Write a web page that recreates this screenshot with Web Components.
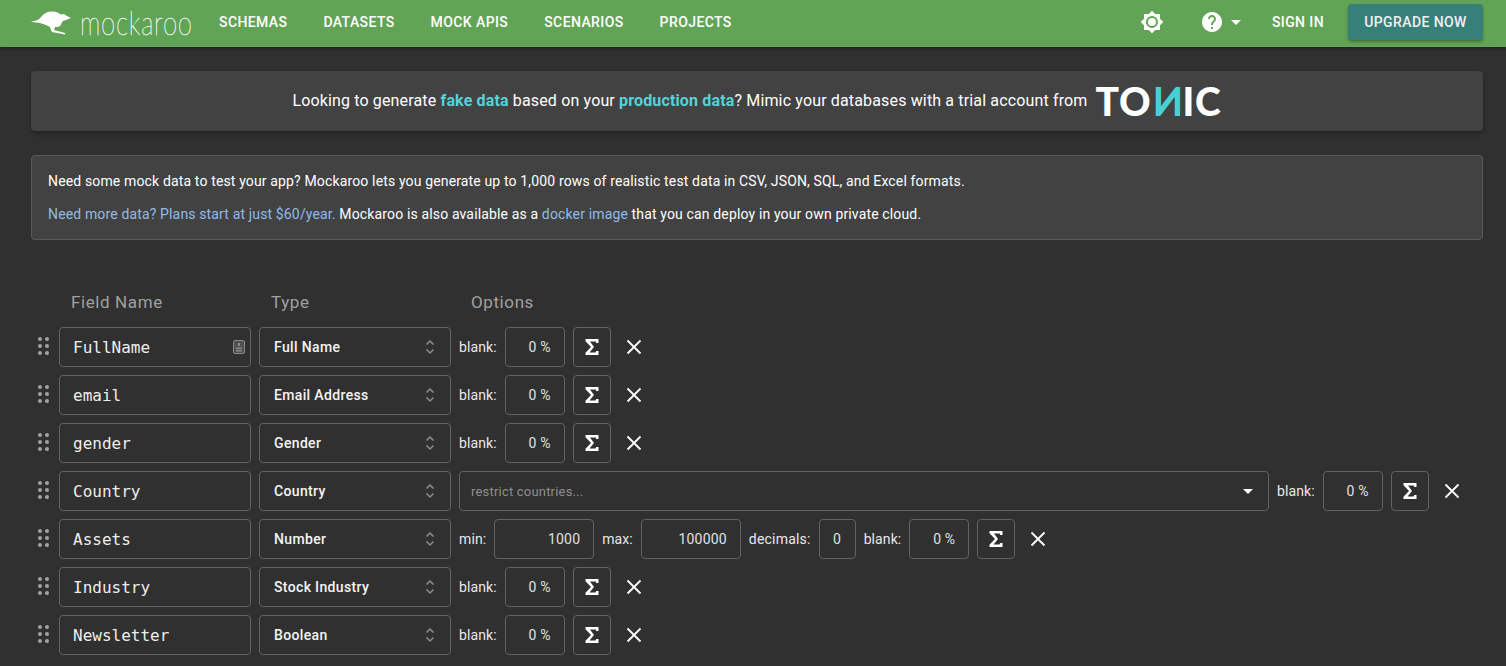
<!DOCTYPE html>
<html lang="en">
<head>
<meta charset="utf-8">
<title>Mockaroo</title>
<style>
  html, body { margin: 0; height: 100%; overflow: hidden; background: #303030; }
  body { font-family: Roboto, "Liberation Sans", sans-serif; color: #fff; }
  .fields { display: flex; flex-direction: column; gap: 8px; }
</style>
</head>
<body>
<mock-appbar></mock-appbar>
<mock-page>
  <tonic-banner></tonic-banner>
  <intro-notice></intro-notice>
  <field-head></field-head>
  <div class="fields">
    <field-row name="FullName" type="Full Name" pii></field-row>
    <field-row name="email" type="Email Address"></field-row>
    <field-row name="gender" type="Gender"></field-row>
    <field-row name="Country" type="Country">
      <text-select slot="options" placeholder="restrict countries..."></text-select>
    </field-row>
    <field-row name="Assets" type="Number">
      <span slot="options" class="opt">
        <opt-label>min:</opt-label><num-box width="100" value="1000"></num-box>
        <opt-label>max:</opt-label><num-box width="100" value="100000"></num-box>
        <opt-label style="letter-spacing:.2px">decimals:</opt-label><num-box width="37" value="0" center></num-box>
      </span>
    </field-row>
    <field-row name="Industry" type="Stock Industry"></field-row>
    <field-row name="Newsletter" type="Boolean"></field-row>
  </div>
</mock-page>

<script>
const define = (tag, css, html, setup) => {
  customElements.define(tag, class extends HTMLElement {
    connectedCallback() {
      if (this.shadowRoot) return
      this.attachShadow({ mode: 'open' })
      const body = typeof html === 'function' ? html(this) : html
      this.shadowRoot.innerHTML = `<style>${css}</style>${body}`
      if (setup) setup(this)
    }
  })
}

define('mock-appbar', `
  :host { display: flex; align-items: center; box-sizing: border-box; height: 47px; background: #62a456; padding: 0 23px 3px 31px;
    box-shadow: 0 2px 4px rgba(0,0,0,.3); position: relative; font: 500 14px Roboto, sans-serif; letter-spacing: .4px; }
  .logo { display: flex; align-items: center; width: 188px; height: 44px; }
  .logo svg { display: block; flex: none; }
  .word { font: 100 33px/44px Lato, Roboto, sans-serif; letter-spacing: 1px; margin-left: 8px; transform: scaleX(.78); transform-origin: left center; white-space: nowrap; -webkit-text-stroke: .35px #fff; }
  nav { display: flex; gap: 36px; }
  .spacer { flex: 1; }
  .right { display: flex; align-items: center; }
  .sun { display: block; margin-right: 36px; }
  .help { display: flex; align-items: center; gap: 7px; margin-right: 31px; }
  .caret { width: 0; height: 0; border: 5px solid transparent; border-top-color: #fff; border-bottom: 0; }
  .up { margin-left: 24px; width: 135px; height: 36px; display: flex; align-items: center; justify-content: center;
    background: #37807a; border-radius: 4px; box-shadow: 0 2px 3px rgba(0,0,0,.3); color: #f0f0f0; }
`, `
  <div class="logo">
    <svg width="41" height="27" viewBox="0 0 41 27"><path fill="#fff" d="M0 12C3 12.300 6 11.600 8 10 10 8.300 11 6.500 13 5 15 3.500 17.500 2.500 20 2.500 22 2.500 24 2.800 25 3 27 3.500 29 5 30 5.500L33 5 35 6.500 40 9 35 11C33 11.500 32 12 31 13 30.500 14.500 30 16 29 17 27.500 18 25.500 18 24 18L23 21 34 24 34 25.500 21 23C20 21.500 19.500 19.500 19 18 17.500 17.500 16.500 16.800 15 16 13 15.500 11 14.500 9 14 6 13.800 3 13.500 0 12Z"/></svg>
    <span class="word">mockaroo</span>
  </div>
  <nav><span>SCHEMAS</span><span>DATASETS</span><span>MOCK APIS</span><span>SCENARIOS</span><span>PROJECTS</span></nav>
  <span class="spacer"></span>
  <div class="right">
    <svg class="sun" width="24" height="24" viewBox="0 0 24 24"><path fill="#fff" d="M20 8.690V4h-4.690L12 .69 8.690 4H4v4.690L.69 12 4 15.310V20h4.690L12 23.310 15.310 20H20v-4.690L23.310 12 20 8.690zM12 18a6 6 0 1 1 0-12 6 6 0 0 1 0 12zm0-10a4 4 0 1 0 0 8 4 4 0 0 0 0-8z"/></svg>
    <div class="help">
      <svg width="24" height="24" viewBox="0 0 24 24" style="display:block"><path fill="#fff" d="M12 2C6.480 2 2 6.480 2 12s4.480 10 10 10 10-4.480 10-10S17.520 2 12 2zm1 17h-2v-2h2v2zm2.070-7.750-.9.920C13.450 12.900 13 13.500 13 15h-2v-.5c0-1.100.45-2.100 1.170-2.830l1.240-1.260c.37-.36.590-.86.590-1.410 0-1.100-.9-2-2-2s-2 .9-2 2H8c0-2.210 1.790-4 4-4s4 1.790 4 4c0 .88-.36 1.680-.93 2.250z"/></svg>
      <span class="caret"></span>
    </div>
    <span>SIGN IN</span>
    <span class="up">UPGRADE NOW</span>
  </div>
`)

define('mock-page', `
  :host { display: block; padding: 24px 23px 0 31px; }
`, `<slot></slot>`)

define('tonic-banner', `
  :host { display: flex; align-items: center; justify-content: center; box-sizing: border-box; height: 60px; padding-bottom: 2px; background: #424242; border-radius: 4px;
    box-shadow: 0 2px 5px rgba(0,0,0,.35); font-size: 16px; letter-spacing: .15px; color: #fff; margin-bottom: 24px; }
  b { color: #55d2d8; font-weight: 700; }
  .tonic { display: inline-flex; align-items: center; margin: 2px 0 0 8px; font: 900 39px/37px Lato, Inter, sans-serif; letter-spacing: .8px; color: #fff; }
  .n { color: #48d0d6; display: inline-block; transform: scaleX(-1); }
`, `
  <span>Looking to generate <b>fake data</b> based on your <b>production data</b>? Mimic your databases with a trial account from</span>
  <span class="tonic">TO<span class="n">N</span>IC</span>
`)

define('intro-notice', `
  :host { display: block; background: #424242; border: 1px solid #5a5a5a; border-radius: 4px; padding: 17px 16px 16px;
    font-size: 14px; line-height: 17px; letter-spacing: .145px; color: #fff; margin-bottom: 50px; }
  p { margin: 0; }
  p + p { margin-top: 16px; }
  a { color: #90bbe8; }
`, `
  <p>Need some mock data to test your app? Mockaroo lets you generate up to 1,000 rows of realistic test data in CSV, JSON, SQL, and Excel formats.</p>
  <p><a>Need more data? Plans start at just $60/year.</a> Mockaroo is also available as a <a>docker image</a> that you can deploy in your own private cloud.</p>
`)

define('field-head', `
  :host { display: flex; padding-left: 40px; height: 24px; margin-bottom: 13px; font-size: 17px; line-height: 24px; letter-spacing: .6px; color: #a0a0a0; }
  span { width: 200px; }
`, `<span>Field Name</span><span>Type</span><span>Options</span>`)

define('opt-label', `
  :host { display: inline-flex; align-items: center; height: 40px; font-size: 14px; letter-spacing: .1px; color: #e8e8e8; white-space: nowrap; }
`, `<slot></slot>`)

define('num-box', `
  :host { display: inline-flex; align-items: center; justify-content: flex-end; box-sizing: border-box; height: 40px;
    border: 1px solid #626262; border-radius: 4px; padding: 0 13px; font-size: 14px; letter-spacing: .2px; color: #e0e0e0; }
  :host([center]) { justify-content: center; padding: 0; }
`, el => {
  el.style.width = el.getAttribute('width') + 'px'
  return el.getAttribute('value')
})

define('text-select', `
  :host { display: flex; align-items: center; box-sizing: border-box; width: 810px; height: 40px; border: 1px solid #626262; border-radius: 4px;
    padding: 0 15px 0 11px; font-size: 13px; letter-spacing: .2px; color: #8e8e8e; }
  span { flex: 1; }
  i { width: 0; height: 0; border: 5px solid transparent; border-top-color: #fff; border-bottom: 0; }
`, el => `<span>${el.getAttribute('placeholder')}</span><i></i>`)

define('field-row', `
  :host { display: flex; align-items: center; gap: 8px; height: 40px; }
  .grip { display: grid; grid-template-columns: 4px 4px; gap: 2.500px; width: 12px; margin: 0 2px 2px 6px; justify-content: center; column-gap: 3px; flex: none; }
  .grip i { width: 4.500px; height: 4.500px; border-radius: 50%; background: #a2a2a2; }
  .box { box-sizing: border-box; width: 192px; height: 40px; flex: none; border: 1px solid #626262; border-radius: 4px; display: flex; align-items: center; position: relative; }
  .name { font: 16px "DejaVu Sans Mono", "Liberation Mono", monospace; padding-left: 13px; color: #eee; }
  .pii { position: absolute; right: 4px; top: 11px; display: block; }
  .type { font-size: 14px; font-weight: 500; letter-spacing: .35px; padding-left: 14px; color: #f4f4f4; }
  .arrows { position: absolute; right: 14px; top: 10px; display: block; }
  .opts { display: flex; align-items: center; gap: 8px; }
  ::slotted(.opt) { display: inline-flex; align-items: center; gap: 8px; }
  .sigma { box-sizing: border-box; width: 38px; height: 40px; border: 1px solid #626262; border-radius: 4px; display: flex; align-items: center; justify-content: center; flex: none; }
  .x { display: block; margin-left: 7px; flex: none; }
  svg { display: block; }
`, el => `
  <div class="grip">${'<i></i>'.repeat(6)}</div>
  <div class="box name">${el.getAttribute('name')}${el.hasAttribute('pii') ? `<svg class="pii" width="14" height="16" viewBox="0 0 14 16"><rect x="1.500" y="1.500" width="11" height="13" rx="1.500" fill="#505050" stroke="#8a8a8a"/><path fill="#8a8a8a" d="M6 4h2v3H6zM4 8.500h6V10H4zM4 11h6v1.500H4z"/></svg>` : ''}</div>
  <div class="box type">${el.getAttribute('type')}
    <svg class="arrows" width="12" height="18" viewBox="0 0 12 18"><path fill="none" stroke="#8c8c8c" stroke-width="1.500" d="M2.500 6.500l3.500-3.500 3.500 3.500M2.500 11.500l3.500 3.500 3.500-3.500"/></svg>
  </div>
  <div class="opts"><slot name="options"></slot>
    <opt-label>blank:</opt-label><num-box width="60" value="0 %"></num-box>
    <div class="sigma"><svg width="14" height="16" viewBox="0 0 14 16"><path fill="#fff" d="M.5 0h13v4h-2.200l-.6-1.500H5L9 8l-4.500 5.500h6L11.300 12h2.200v4H.5v-2.200L6 8 .5 2.200z"/></svg></div>
    <svg class="x" width="16" height="16" viewBox="0 0 16 16"><path stroke="#fff" stroke-width="1.800" d="M1.500 1.500l13 13M14.500 1.500l-13 13"/></svg>
  </div>
`)
</script>
</body>
</html>
